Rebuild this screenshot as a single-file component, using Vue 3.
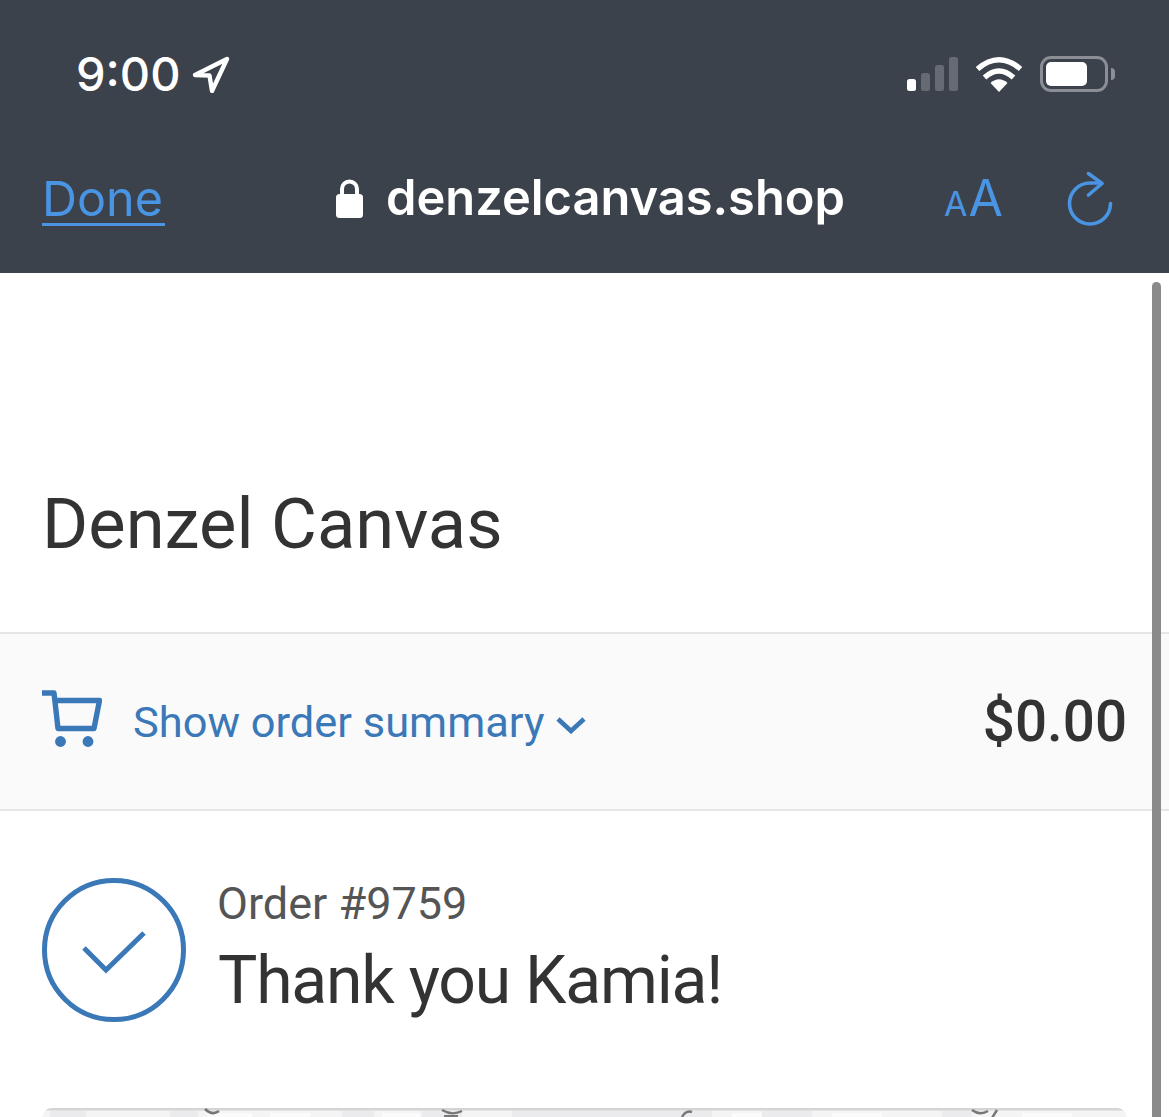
<script setup>
const signalBars = [
  { h: 12, on: true },
  { h: 18, on: false },
  { h: 26, on: false },
  { h: 34, on: false },
]
</script>

<template>
  <div class="screen">
    <header class="browser">
      <div class="status">
        <div class="clock">
          <span class="time">9:00</span>
          <svg class="locate" width="38" height="38" viewBox="0 0 38 38">
            <path d="M3 20 L35 4 L20 36 L17.5 20.5 Z" fill="none" stroke="#fff" stroke-width="4.4" stroke-linejoin="round" />
          </svg>
        </div>
        <div class="indicators">
          <div class="signal">
            <i v-for="(b, n) in signalBars" :key="n" :class="{ on: b.on }" :style="{ height: b.h + 'px' }"></i>
          </div>
          <svg class="wifi" width="48" height="36" viewBox="0 0 48 36">
            <path d="M24 36 L15.5 27 Q24 19.5 32.5 27 Z" fill="#fff" />
            <path d="M9.5 21.5 Q24 8.5 38.5 21.5" fill="none" stroke="#fff" stroke-width="5.4" />
            <path d="M2.5 13 Q24 -5.5 45.5 13" fill="none" stroke="#fff" stroke-width="5.4" />
          </svg>
          <div class="battery">
            <div class="cell"><div class="charge"></div></div>
            <div class="nub"></div>
          </div>
        </div>
      </div>
      <div class="urlbar">
        <a class="done">Done</a>
        <div class="address">
          <svg class="lock" width="27" height="39" viewBox="0 0 27 39">
            <path d="M6 17 V10 a7.5 7.5 0 0 1 15 0 V17" fill="none" stroke="#fff" stroke-width="4" />
            <rect x="0" y="15" width="27" height="24" rx="3.5" fill="#fff" />
          </svg>
          <span class="host">denzelcanvas.shop</span>
        </div>
        <div class="tools">
          <div class="aa"><span class="small">A</span><span class="big">A</span></div>
          <svg class="reload" width="46" height="54" viewBox="0 0 46 54">
            <path d="M43.5 31.5 A20.5 20.5 0 1 1 23 11 H33" fill="none" stroke="#4a94e4" stroke-width="3.6" stroke-linecap="round" />
            <path d="M21.5 1.5 L35 11.5 L21.5 23" fill="none" stroke="#4a94e4" stroke-width="3.6" stroke-linecap="round" stroke-linejoin="round" />
          </svg>
        </div>
      </div>
    </header>

    <main class="page">
      <h1 class="shop">Denzel Canvas</h1>

      <section class="summary">
        <div class="toggle">
          <svg class="cart" width="60" height="58" viewBox="0 0 60 58">
            <path d="M0 3 H12 L16 38.5 H52 L57.5 10.5 H13" fill="none" stroke="#3a78b8" stroke-width="5.4" stroke-linejoin="round" />
            <circle cx="18.5" cy="51.5" r="5.4" fill="#3a78b8" />
            <circle cx="46" cy="51.5" r="5.4" fill="#3a78b8" />
          </svg>
          <span class="toggle-label">Show order summary</span>
          <svg class="chevron" width="30" height="18" viewBox="0 0 30 18">
            <path d="M2 3 L15 15 L28 3" fill="none" stroke="#3a78b8" stroke-width="4.6" />
          </svg>
        </div>
        <span class="total">$0.00</span>
      </section>

      <section class="order">
        <svg class="confirm" width="144" height="144" viewBox="0 0 144 144">
          <circle cx="72" cy="72" r="69.5" fill="none" stroke="#3a78b8" stroke-width="5" />
          <path d="M42 70 L64 92 L102 55" fill="none" stroke="#3a78b8" stroke-width="5" />
        </svg>
        <div class="order-text">
          <div class="number">Order #9759</div>
          <div class="thanks">Thank you Kamia!</div>
        </div>
      </section>

      <div class="map">
        <svg width="1085" height="12" viewBox="0 0 1085 12" preserveAspectRatio="none">
          <rect width="1085" height="12" fill="#f4f4f4" />
          <rect x="0" width="1085" height="2.5" fill="#d4d4d4" />
          <g fill="#ebebed">
            <rect x="8" y="3" width="36" height="9" />
            <rect x="128" y="3" width="28" height="9" />
            <rect x="300" y="3" width="32" height="9" />
            <rect x="380" y="3" width="40" height="9" />
            <rect x="470" y="3" width="200" height="9" />
            <rect x="720" y="3" width="50" height="9" />
            <rect x="900" y="3" width="30" height="9" />
          </g>
          <g fill="#fbfbfb">
            <rect x="165" y="5" width="45" height="7" />
            <rect x="228" y="5" width="40" height="7" />
            <rect x="340" y="5" width="38" height="7" />
            <rect x="690" y="5" width="30" height="7" />
            <rect x="790" y="5" width="50" height="7" />
            <rect x="980" y="5" width="50" height="7" />
          </g>
          <path d="M163 1 Q170 8 177 3" fill="none" stroke="#777" stroke-width="2.5" />
          <path d="M400 2 Q410 8 420 3 M402 8 H416" fill="none" stroke="#777" stroke-width="2.2" />
          <path d="M640 9 Q644 2 650 4 M930 2 Q938 8 946 3 M955 2 L950 10" fill="none" stroke="#777" stroke-width="2.5" />
        </svg>
      </div>
    </main>

    <div class="scrollbar"></div>
  </div>
</template>

<style scoped>
.screen {
  position: relative;
  width: 1169px;
  height: 1117px;
  overflow: hidden;
  background: #fff;
  font-family: Inter, "Liberation Sans", sans-serif;
  color: #333;
}

.browser {
  height: 273px;
  box-sizing: border-box;
  background: #3c424c;
  padding-top: 44px;
}

.status {
  height: 60px;
  padding: 0 54px 0 76px;
  display: flex;
  align-items: center;
  justify-content: space-between;
}

.clock {
  display: flex;
  align-items: center;
  gap: 11px;
}

.time {
  font-size: 47px;
  font-weight: 500;
  line-height: 60px;
  color: #fff;
}

.locate {
  display: block;
}

.indicators {
  display: flex;
  align-items: center;
}

.signal {
  display: flex;
  align-items: flex-end;
  gap: 5px;
  height: 34px;
}

.signal i {
  display: block;
  width: 9px;
  border-radius: 2.5px;
  background: #666b73;
}

.signal i.on {
  background: #fff;
}

.wifi {
  display: block;
  margin-left: 17px;
}

.battery {
  display: flex;
  align-items: center;
  margin-left: 17px;
}

.cell {
  box-sizing: border-box;
  width: 68px;
  height: 36px;
  border: 3px solid #8b8f95;
  border-radius: 11px;
  padding: 3px;
}

.charge {
  width: 41px;
  height: 24px;
  border-radius: 5px;
  background: #fff;
}

.nub {
  width: 4px;
  height: 12px;
  margin-left: 3px;
  border-radius: 0 6px 6px 0;
  background: #8b8f95;
}

.urlbar {
  height: 64px;
  margin-top: 62px;
  padding: 0 56px 0 42px;
  display: flex;
  align-items: center;
}

.done {
  font-size: 48.5px;
  line-height: 48px;
  color: #4a94e4;
  padding: 2px 2px 0 0;
  border-bottom: 3px solid #4a94e4;
  margin-top: 2px;
}

.address {
  display: flex;
  align-items: center;
  margin-left: 171px;
  gap: 23px;
}

.lock {
  display: block;
}

.host {
  font-size: 48.8px;
  font-weight: 600;
  line-height: 56px;
  color: #fff;
  white-space: nowrap;
}

.tools {
  margin-left: auto;
  display: flex;
  align-items: center;
  gap: 64px;
}

.aa {
  display: flex;
  align-items: baseline;
  gap: 1px;
  margin-top: 6px;
  color: #4a94e4;
  line-height: 50px;
}

.aa .small {
  font-size: 34px;
}

.aa .big {
  font-size: 50px;
}

.reload {
  display: block;
  margin-top: 2px;
}

.page {
  display: flex;
  flex-direction: column;
}

.shop {
  margin: 0;
  padding: 213px 42px 70px;
  font-family: Roboto, "Liberation Sans", sans-serif;
  font-size: 70.5px;
  font-weight: 400;
  line-height: 76px;
  color: #333;
}

.summary {
  height: 179px;
  box-sizing: border-box;
  background: #fafafa;
  border-top: 2px solid #e6e6e6;
  border-bottom: 2px solid #e6e6e6;
  padding: 0 42px;
  display: flex;
  align-items: center;
  justify-content: space-between;
}

.toggle {
  display: flex;
  align-items: center;
}

.cart {
  display: block;
  margin-top: -5px;
}

.toggle-label {
  margin-left: 31px;
  padding-top: 2px;
  font-family: Roboto, "Liberation Sans", sans-serif;
  font-size: 43.4px;
  line-height: 50px;
  color: #3a78b8;
}

.chevron {
  display: block;
  margin-left: 12px;
  margin-top: 6px;
}

.total {
  font-family: Roboto, "Liberation Sans", sans-serif;
  font-size: 56.5px;
  font-weight: 500;
  line-height: 64px;
  color: #333;
}

.order {
  margin-top: 67px;
  padding: 0 42px;
  display: flex;
  align-items: center;
  gap: 32px;
}

.confirm {
  display: block;
}

.order-text {
  display: flex;
  flex-direction: column;
  margin-top: -3px;
  font-family: Roboto, "Liberation Sans", sans-serif;
}

.number {
  font-size: 45px;
  line-height: 50px;
  color: #555;
  margin-left: -1px;
}

.thanks {
  margin-top: 14px;
  font-size: 66px;
  letter-spacing: -1.2px;
  line-height: 76px;
  color: #333;
}

.map {
  margin: 86px 42px 0;
  height: 60px;
  border-radius: 10px 10px 0 0;
  overflow: hidden;
}

.map svg {
  display: block;
}

.scrollbar {
  position: absolute;
  top: 282px;
  bottom: -10px;
  left: 1152px;
  width: 9px;
  border-radius: 5px;
  background: #8a8a8a;
}
</style>
